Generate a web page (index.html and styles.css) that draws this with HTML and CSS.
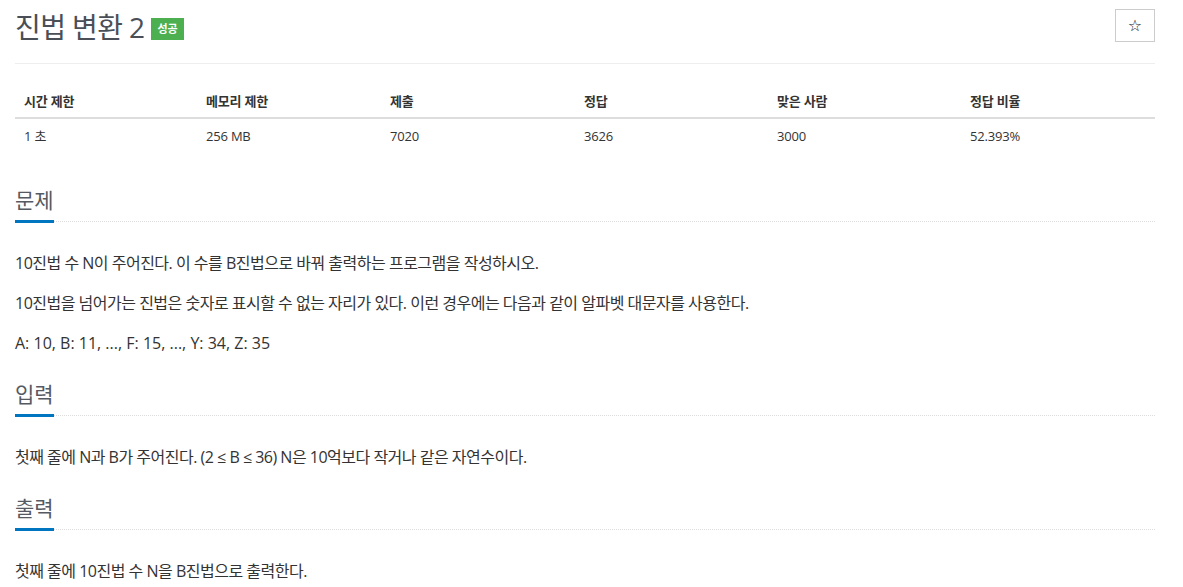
FILE: index.html
```html
<!DOCTYPE html>
<html lang="ko">
<head>
<meta charset="utf-8">
<link rel="stylesheet" href="styles.css">
</head>
<body>
<div class="container">
  <div class="page-header">
    <h1 class="title">진법 변환 2 <span class="label-success">성공</span></h1>
    <button class="star-btn" type="button">☆</button>
  </div>
  <table class="info">
    <colgroup>
      <col class="c1"><col class="c2"><col class="c3"><col class="c4"><col class="c5"><col>
    </colgroup>
    <thead>
      <tr><th>시간 제한</th><th>메모리 제한</th><th>제출</th><th>정답</th><th>맞은 사람</th><th>정답 비율</th></tr>
    </thead>
    <tbody>
      <tr><td>1 초</td><td>256 MB</td><td>7020</td><td>3626</td><td>3000</td><td>52.393%</td></tr>
    </tbody>
  </table>

  <section class="problem-section">
    <div class="headline"><h2>문제</h2></div>
    <div class="text">
      <p>10진법 수 N이 주어진다. 이 수를 B진법으로 바꿔 출력하는 프로그램을 작성하시오.</p>
      <p>10진법을 넘어가는 진법은 숫자로 표시할 수 없는 자리가 있다. 이런 경우에는 다음과 같이 알파벳 대문자를 사용한다.</p>
      <p class="latin">A: 10, B: 11, ..., F: 15, ..., Y: 34, Z: 35</p>
    </div>
  </section>
  <section class="problem-section">
    <div class="headline"><h2>입력</h2></div>
    <div class="text">
      <p>첫째 줄에 N과 B가 주어진다. (2 ≤ B ≤ 36) N은 10억보다 작거나 같은 자연수이다.</p>
    </div>
  </section>
  <section class="problem-section">
    <div class="headline"><h2>출력</h2></div>
    <div class="text">
      <p>첫째 줄에 10진법 수 N을 B진법으로 출력한다.</p>
    </div>
  </section>
</div>
</body>
</html>
```
FILE: styles.css
```css
* { box-sizing: border-box; }
html, body { margin: 0; padding: 0; background: #fff; }
body {
  font-family: "Open Sans", "Noto Sans CJK KR", sans-serif;
  color: #333;
}
.container {
  width: 1140px;
  margin-left: 15px;
}
.page-header {
  display: flex;
  justify-content: space-between;
  align-items: flex-start;
  padding-top: 9px;
  border-bottom: 1px solid #eee;
  height: 64px;
}
.title {
  margin: 0;
  margin-top: 2px;
  font-size: 28px;
  font-weight: 400;
  letter-spacing: -0.6px;
  color: #4a4f57;
  line-height: 32px;
  display: flex;
  align-items: center;
  gap: 7px;
}
.label-success {
  display: inline-block;
  background: #4caf50;
  color: #fff;
  font-size: 11px;
  font-weight: 700;
  letter-spacing: 0;
  line-height: 22px;
  height: 22px;
  padding: 0 6px;
  margin-top: 4px;
}
.star-btn {
  width: 40px;
  height: 33px;
  border: 1px solid #ccc;
  background: #fff;
  font-size: 16px;
  color: #222;
  padding: 0;
  font-family: "DejaVu Sans", sans-serif;
}
.info {
  width: 100%;
  border-collapse: collapse;
  margin-top: 19px;
  font-size: 13px;
  letter-spacing: -0.2px;
}
.info .c1 { width: 182px; }
.info .c2 { width: 184px; }
.info .c3 { width: 194px; }
.info .c4 { width: 193px; }
.info .c5 { width: 193px; }
.info th {
  text-align: left;
  font-weight: 700;
  padding: 8px 9px 6px;
  line-height: 20px;
  border-bottom: 2px solid #ddd;
}
.info td {
  text-align: left;
  padding: 7px 9px;
  line-height: 20px;
}
.problem-section { margin-top: 32px; }
.problem-section + .problem-section { margin-top: 24px; }
.headline {
  border-bottom: 1px dotted #ddd;
  margin-bottom: 29px;
}
.headline h2 {
  display: inline-block;
  margin: 0 0 -2px 0;
  font-size: 21px;
  font-weight: 400;
  color: #555a62;
  line-height: 30px;
  padding-bottom: 5px;
  border-bottom: 3px solid #0076c0;
}
.text { font-size: 16px; letter-spacing: -0.5px; }
.text p {
  margin: 0 0 16px 0;
  line-height: 24px;
}
.text p.latin { letter-spacing: 0; }
```
